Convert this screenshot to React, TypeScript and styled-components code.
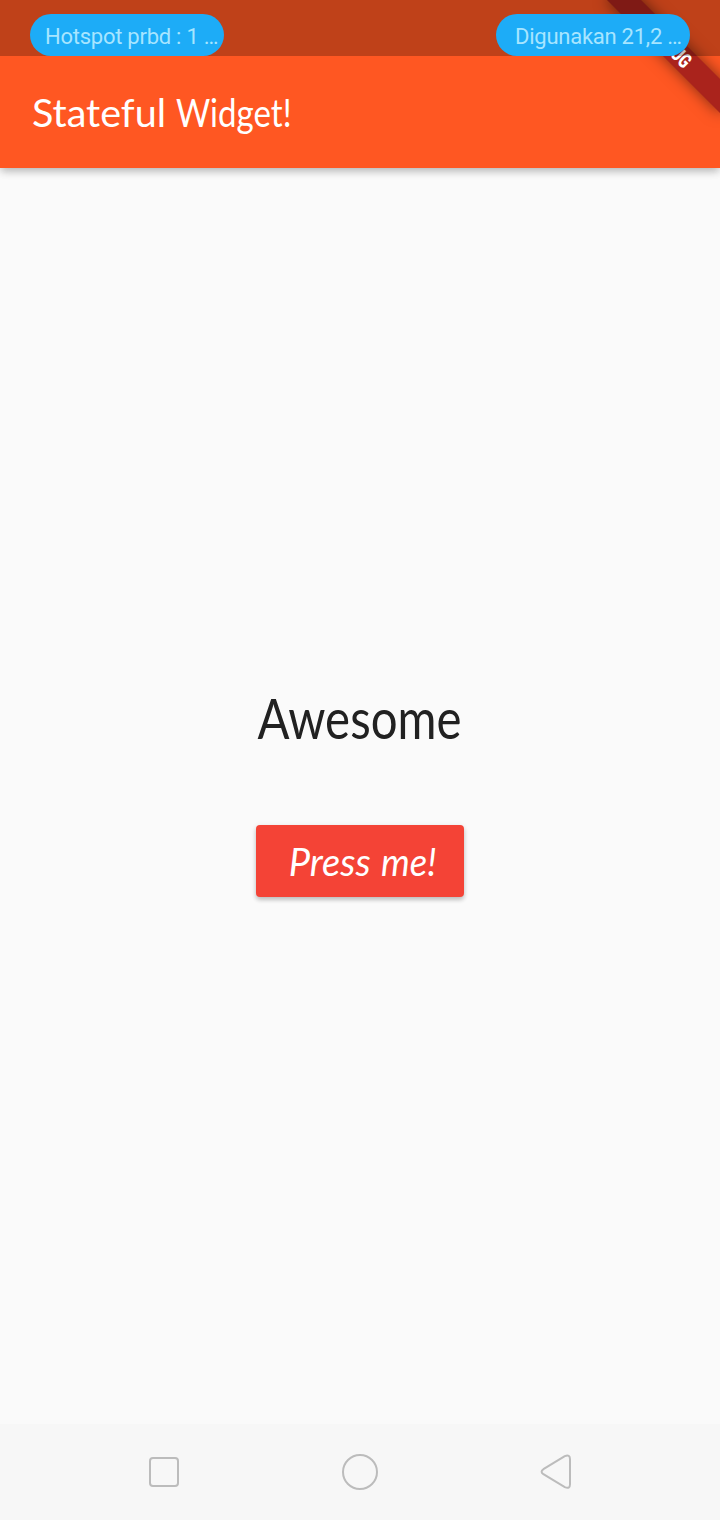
import React from "react";
import styled, { createGlobalStyle } from "styled-components";

const GlobalStyle = createGlobalStyle`
  html, body { margin: 0; padding: 0; background: #fafafa; }
  * { box-sizing: border-box; }
`;

const Screen = styled.div`
  position: relative;
  width: 720px;
  height: 1520px;
  display: flex;
  flex-direction: column;
  overflow: hidden;
  background: #fafafa;
  font-family: Lato, "Open Sans", sans-serif;
`;

const Header = styled.header`
  position: relative;
  height: 168px;
  flex: none;
  display: flex;
  flex-direction: column;
  background: #ff5722;
  box-shadow: 0 4px 8px -1px rgba(0, 0, 0, 0.2), 0 2px 10px rgba(0, 0, 0, 0.12);
`;

const StatusBar = styled.div`
  position: relative;
  z-index: 2;
  height: 56px;
  display: flex;
  justify-content: space-between;
  align-items: flex-end;
  padding: 0 30px;
  background: rgba(0, 0, 0, 0.25);
`;

const StatusPill = styled.div<{ $inset: number }>`
  width: 194px;
  height: 42px;
  padding-left: ${(p) => p.$inset}px;
  border-radius: 21px;
  background: #1dacf7;
  color: #a7e5ff;
  font: 400 22px/45px Roboto, sans-serif;
  letter-spacing: -0.25px;
  white-space: nowrap;
`;

const AppBar = styled.div`
  height: 112px;
  display: flex;
  align-items: center;
  padding-left: 32px;
`;

const Title = styled.h1`
  display: flex;
  margin: 0;
  color: #fff;
  font-size: 38px;
  font-weight: 400;
  line-height: 48px;
  white-space: pre;
`;

const Word = styled.span<{ $stretch: number; $shift?: number }>`
  display: inline-block;
  white-space: pre;
  transform-origin: left;
  transform: translateX(${(p) => p.$shift ?? 0}px) scaleX(${(p) => p.$stretch});
`;

const BannerClip = styled.div`
  position: absolute;
  z-index: 1;
  inset: 0 0 auto auto;
  width: 200px;
  height: 168px;
  overflow: hidden;
`;

const Banner = styled.div`
  position: absolute;
  left: 72px;
  top: 36px;
  width: 160px;
  height: 24px;
  transform: rotate(45deg);
  background: #aa231c;
  box-shadow: 0 0 15px rgba(0, 0, 0, 0.5);
  color: #fff;
  font: 900 20.4px/24px Roboto, sans-serif;
  text-align: center;
`;

const BannerLabel = styled.span`
  display: inline-block;
  transform: scaleX(0.72);
`;

const Content = styled.main`
  flex: 1;
  display: flex;
  flex-direction: column;
  align-items: center;
  padding-top: 512px;
`;

const Message = styled.div`
  height: 76px;
  color: #212121;
  font-size: 56px;
  line-height: 76px;
  white-space: nowrap;
  transform: scaleX(0.846);
`;

const PressButton = styled.button`
  width: 208px;
  height: 72px;
  margin-top: 69px;
  padding: 0;
  border: 0;
  border-radius: 4px;
  background: #f44336;
  box-shadow: 0 3px 4px rgba(0, 0, 0, 0.2), 0 1px 6px rgba(0, 0, 0, 0.08);
  color: #fff;
  font: italic 400 38px/72px Lato, sans-serif;
`;

const NavigationBar = styled.nav`
  height: 96px;
  flex: none;
  display: flex;
  justify-content: space-between;
  align-items: center;
  padding: 0 144px;
  background: #f7f7f7;
`;

const NavIcon = styled.svg`
  width: 40px;
  height: 40px;
  fill: none;
  stroke: #bcbcbc;
  stroke-width: 2;
`;

export default function App() {
  return (
    <Screen>
      <GlobalStyle />
      <Header>
        <StatusBar>
          <StatusPill $inset={15}>Hotspot prbd : 1 …</StatusPill>
          <StatusPill $inset={19}>Digunakan 21,2 …</StatusPill>
        </StatusBar>
        <AppBar>
          <Title>
            <Word $stretch={1.04}>Stateful </Word>
            <Word $stretch={0.87} $shift={5}>Widget!</Word>
          </Title>
        </AppBar>
        <BannerClip>
          <Banner>
            <BannerLabel>DEBUG</BannerLabel>
          </Banner>
        </BannerClip>
      </Header>
      <Content>
        <Message>Awesome</Message>
        <PressButton>
          <Word $stretch={1} $shift={3}>Press </Word>
          <Word $stretch={0.96} $shift={4}>me!</Word>
        </PressButton>
      </Content>
      <NavigationBar>
        <NavIcon viewBox="0 0 40 40">
          <rect x="6" y="6" width="28" height="28" rx="3" />
        </NavIcon>
        <NavIcon viewBox="0 0 40 40">
          <circle cx="20" cy="20" r="17" />
        </NavIcon>
        <NavIcon viewBox="0 0 40 40">
          <path d="M28.8 4.2 7.4 17.2Q3.8 19.7 7.4 22.2L28.8 35.2Q34 37.4 34 32.2V7.2Q34 2 28.8 4.2Z" />
        </NavIcon>
      </NavigationBar>
    </Screen>
  );
}
